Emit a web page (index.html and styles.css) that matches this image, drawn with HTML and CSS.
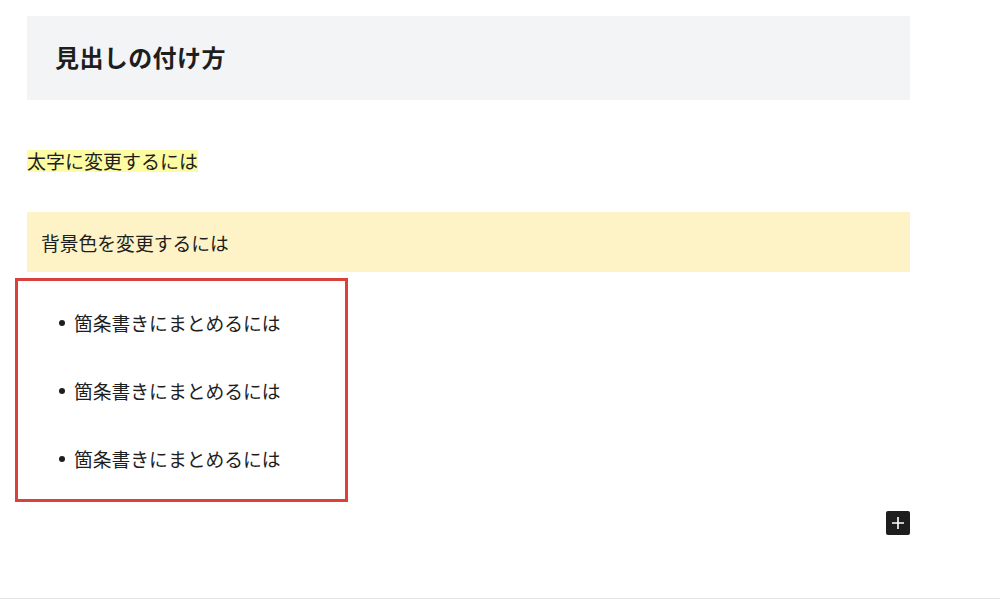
FILE: index.html
```html
<!DOCTYPE html>
<html lang="ja">
<head>
    <meta charset="UTF-8">
    <meta name="viewport" content="width=device-width, initial-scale=1.0">
    <title>見出しの付け方</title>
    <link rel="stylesheet" href="styles.css">
</head>
<body>
    <div class="editor">
        <div class="content">
            <h2 class="heading-block">見出しの付け方</h2>

            <p class="para-block"><span class="marker">太字に変更するには</span></p>

            <p class="bg-block">背景色を変更するには</p>

            <!-- list block, outlined in red -->
            <div class="list-frame">
                <ul class="list-block">
                    <li>箇条書きにまとめるには</li>
                    <li>箇条書きにまとめるには</li>
                    <li>箇条書きにまとめるには</li>
                </ul>
            </div>

            <div class="inserter-row">
                <button type="button" class="inserter" aria-label="ブロックを追加">
                    <svg width="14" height="14" viewBox="0 0 14 14">
                        <path d="M7 1v12M1 7h12" stroke="#fff" stroke-width="1.6" fill="none"/>
                    </svg>
                </button>
            </div>
        </div>
    </div>
</body>
</html>
```

FILE: styles.css
```css
body {
    font-family: "Noto Sans CJK JP", "Noto Sans", sans-serif;
    margin: 0;
    padding: 0;
    background-color: #fff;
    color: #1e1e1e;
}
.editor {
    height: 599px;
    box-sizing: border-box;
    border-bottom: 1px solid #e4e4e4;
}
.content {
    width: 883px;
    margin-left: 27px;
    padding-top: 16px;
}
.heading-block {
    margin: 0;
    height: 84px;
    box-sizing: border-box;
    padding: 0 0 4px 28px;
    display: flex;
    align-items: center;
    background-color: #f3f4f6;
    font-size: 24px;
    font-weight: 700;
    letter-spacing: 0.4px;
}
.para-block {
    margin: 50px 0 0;
    font-size: 19px;
    line-height: 22px;
}
.marker {
    display: inline-block;
    background-color: #fdfca3;
    letter-spacing: 0;
}
.bg-block {
    margin: 40px 0 0;
    height: 60px;
    box-sizing: border-box;
    padding-left: 14px;
    display: flex;
    align-items: center;
    background-color: #fef3c7;
    font-size: 18.8px;
}
.list-frame {
    margin: 6px 0 0 -12px;
    width: 333px;
    height: 224px;
    box-sizing: border-box;
    border: 3px solid #d9413d;
}
.list-block {
    list-style: none;
    margin: 0;
    padding: 28px 0 0 41px;
    display: grid;
    gap: 40px;
}
.list-block li {
    display: flex;
    align-items: center;
    gap: 9px;
    font-size: 18.8px;
    line-height: 28px;
}
.list-block li::before {
    content: "";
    width: 6px;
    height: 6px;
    border-radius: 50%;
    background-color: #1e1e1e;
}
.inserter-row {
    display: flex;
    justify-content: flex-end;
    margin-top: 9px;
}
.inserter {
    width: 24px;
    height: 24px;
    padding: 0;
    border: none;
    border-radius: 2px;
    background-color: #1e1e1e;
    display: flex;
    align-items: center;
    justify-content: center;
    cursor: pointer;
}
```
